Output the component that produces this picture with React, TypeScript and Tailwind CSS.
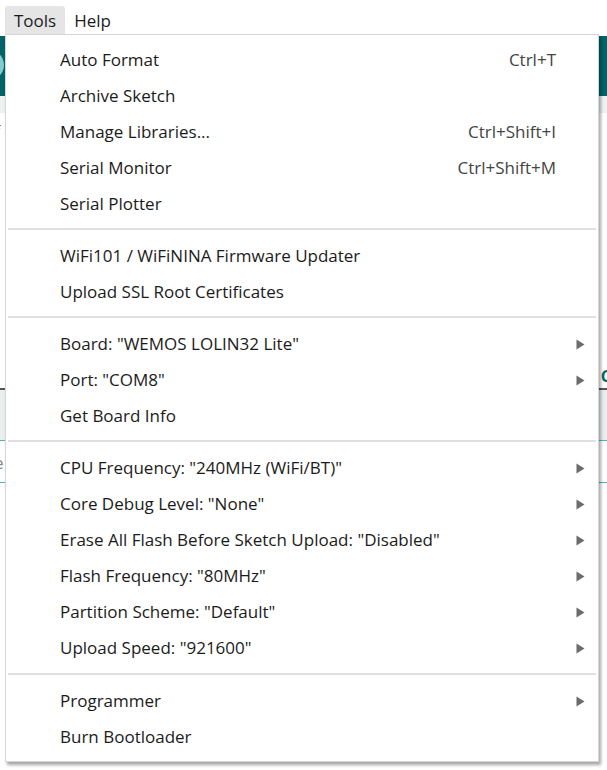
import React from "react";

type Item = { label: string; shortcut?: string; arrow?: boolean };

const groups: Item[][] = [
  [
    { label: "Auto Format", shortcut: "Ctrl+T" },
    { label: "Archive Sketch" },
    { label: "Manage Libraries...", shortcut: "Ctrl+Shift+I" },
    { label: "Serial Monitor", shortcut: "Ctrl+Shift+M" },
    { label: "Serial Plotter" },
  ],
  [
    { label: "WiFi101 / WiFiNINA Firmware Updater" },
    { label: "Upload SSL Root Certificates" },
  ],
  [
    { label: 'Board: "WEMOS LOLIN32 Lite"', arrow: true },
    { label: 'Port: "COM8"', arrow: true },
    { label: "Get Board Info" },
  ],
  [
    { label: 'CPU Frequency: "240MHz (WiFi/BT)"', arrow: true },
    { label: 'Core Debug Level: "None"', arrow: true },
    { label: 'Erase All Flash Before Sketch Upload: "Disabled"', arrow: true },
    { label: 'Flash Frequency: "80MHz"', arrow: true },
    { label: 'Partition Scheme: "Default"', arrow: true },
    { label: 'Upload Speed: "921600"', arrow: true },
  ],
  [{ label: "Programmer", arrow: true }, { label: "Burn Bootloader" }],
];

function Arrow() {
  return (
    <svg width="9" height="11" viewBox="0 0 9 11" className="block">
      <path d="M0.5 0.5 L8.5 5.5 L0.5 10.5 Z" fill="#6b6b6b" />
    </svg>
  );
}

export default function App() {
  return (
    <div
      className="relative w-[607px] h-[770px] overflow-hidden bg-white text-[#1b1b1b]"
      style={{ fontFamily: '"Open Sans", "Noto Sans", sans-serif' }}
    >
      {/* background app window */}
      <div className="flex flex-col">
        <div className="h-[36px] bg-white" />
        <div className="h-[60px] bg-[#006468] relative">
          <div className="absolute left-[-26px] top-[14px] w-[30px] h-[30px] rounded-full bg-[#7fcbcd]" />
        </div>
        <div className="h-[17px] bg-[#ecf1f1]" />
        <div className="h-[275px] bg-white relative">
          <span className="absolute left-[-5px] top-[6px] text-[15px] text-[#444]">f</span>
          <span className="absolute right-[-4px] bottom-[0px] text-[16px] font-bold text-[#006468]">C</span>
        </div>
        <div className="h-[2px] bg-[#555]" />
        <div className="h-[50px] bg-[#e9efef]" />
        <div className="h-[1px] bg-[#4db7bb]" />
        <div className="h-[41px] bg-white relative">
          <span className="absolute left-[-6px] top-[9px] text-[17px] text-[#888]">e</span>
        </div>
        <div className="h-[1px] bg-[#4db7bb]" />
        <div className="flex-1 bg-white" />
      </div>

      {/* menu bar */}
      <div className="absolute left-0 top-0 w-full h-[35px] flex items-end pl-[5px] text-[17px] bg-white">
        <div className="h-[29px] px-[9px] flex items-center bg-[#e5e5e5] rounded-t-[3px]">Tools</div>
        <div className="h-[29px] px-[9px] flex items-center">Help</div>
      </div>

      {/* dropdown */}
      <div className="absolute left-[5px] top-[34px] w-[594px] bg-white border border-[#d6d6d6] shadow-[2px_3px_3px_rgba(0,0,0,0.35)] pt-[7px] pb-[6px] text-[17px]">
        {groups.map((g, gi) => (
          <div key={gi}>
            {gi > 0 && (
              <div
                className={
                  gi === 4
                    ? "mt-[7px] mb-[8px] mx-[2px] h-[2px] bg-[#e0e0e0]"
                    : "mt-[6px] mb-[8px] mx-[2px] h-[2px] bg-[#e0e0e0]"
                }
              />
            )}
            {g.map((it, i) => (
              <div key={i} className="h-[36px] flex items-center pl-[54px] pr-[12px]">
                <span className="flex-1 whitespace-nowrap">{it.label}</span>
                {it.shortcut && <span className="text-[#444] mr-[30px]">{it.shortcut}</span>}
                {it.arrow && (
                  <span className="mr-[1px]">
                    <Arrow />
                  </span>
                )}
              </div>
            ))}
          </div>
        ))}
      </div>
    </div>
  );
}
